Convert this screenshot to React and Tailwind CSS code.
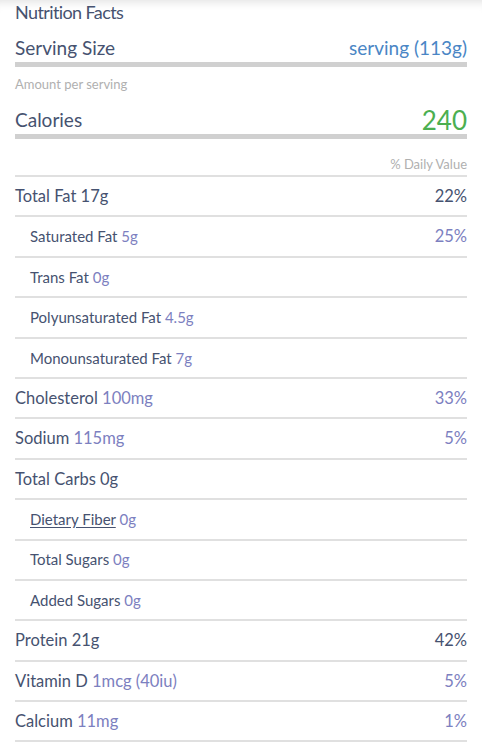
import React from 'react'

const rows = [
  { name: 'Total Fat', amount: '17g', dv: '22%', main: true },
  { name: 'Saturated Fat', amount: '5g', dv: '25%', sub: true },
  { name: 'Trans Fat', amount: '0g', sub: true },
  { name: 'Polyunsaturated Fat', amount: '4.5g', sub: true },
  { name: 'Monounsaturated Fat', amount: '7g', sub: true },
  { name: 'Cholesterol', amount: '100mg', dv: '33%' },
  { name: 'Sodium', amount: '115mg', dv: '5%' },
  { name: 'Total Carbs', amount: '0g', main: true },
  { name: 'Dietary Fiber', amount: '0g', sub: true, link: true },
  { name: 'Total Sugars', amount: '0g', sub: true },
  { name: 'Added Sugars', amount: '0g', sub: true },
  { name: 'Protein', amount: '21g', dv: '42%', main: true },
  { name: 'Vitamin D', amount: '1mcg (40iu)', dv: '5%' },
  { name: 'Calcium', amount: '11mg', dv: '1%' },
]

export default function App() {
  return (
    <div
      className="min-h-[750px] bg-white px-[15px] text-[#465270] shadow-[inset_0_10px_10px_-8px_rgba(0,0,0,0.12)]"
      style={{ fontFamily: 'Lato, "Open Sans", sans-serif' }}
    >
      <div className="flex h-[24px] items-center text-[18px] tracking-[-0.6px]">Nutrition Facts</div>

      <div className="mt-[10px] flex h-[28px] items-center justify-between text-[19px]">
        <span>Serving Size</span>
        <span className="text-[#4a86c5]">serving (113g)</span>
      </div>
      <div className="h-[5px] bg-[#d0d0d0]" />

      <div className="flex h-[36px] items-center text-[13px] text-[#b0b0b0]">Amount per serving</div>

      <div className="flex h-[31px] items-center justify-between pt-[3px]">
        <span className="text-[19px]">Calories</span>
        <span className="text-[26px] leading-none text-[#4caf50]">240</span>
      </div>
      <div className="h-[5px] bg-[#d0d0d0]" />

      <div className="flex h-[38px] items-end justify-end border-b-2 border-[#e0e0e0] pb-[3px] text-[13px] leading-[15px] text-[#b0b0b0]">
        % Daily Value
      </div>

      {rows.map((r) => (
        <div
          key={r.name}
          className="flex h-[40.4px] items-center justify-between border-b-2 border-[#e0e0e0]"
        >
          <span className={r.sub ? 'pl-[15px] text-[15px]' : 'text-[16.5px]'}>
            <span className={r.link ? 'underline underline-offset-2' : ''}>{r.name}</span>{' '}
            <span className={r.main ? '' : 'text-[#7c80c0]'}>{r.amount}</span>
          </span>
          {r.dv && (
            <span className={r.main ? 'text-[16.5px]' : 'text-[16.5px] text-[#7c80c0]'}>{r.dv}</span>
          )}
        </div>
      ))}
    </div>
  )
}
